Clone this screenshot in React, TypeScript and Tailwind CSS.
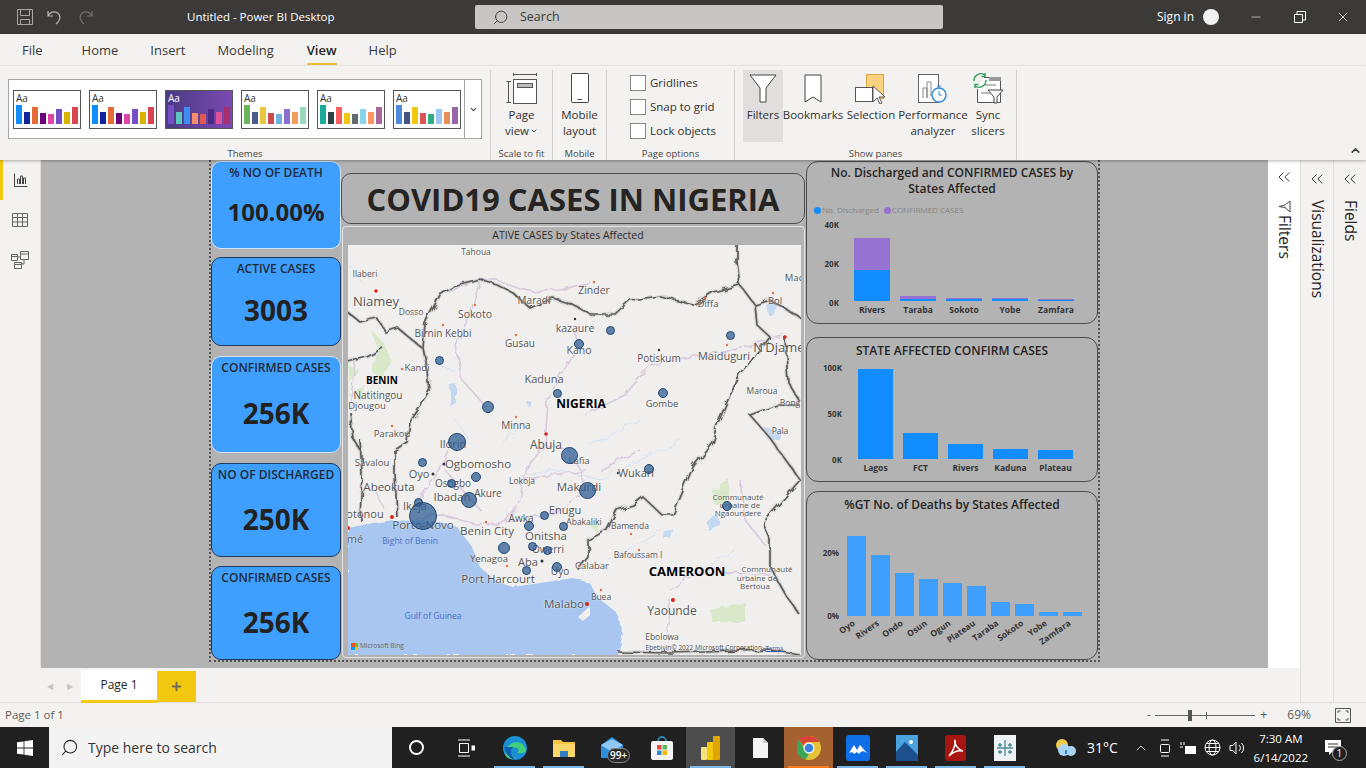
import { ChevronDown, ChevronUp, ChevronsLeft, Minus, Plus, Search, X } from 'lucide-react';

const themes = [
  { bg: 'bg-white', text: 'text-[#333]', bars: ['#118DFF', '#12239E', '#E66C37', '#6B007B', '#E044A7', '#744EC2', '#D9B300', '#D64550'] },
  { bg: 'bg-white', text: 'text-[#333]', bars: ['#118DFF', '#12239E', '#E66C37', '#6B007B', '#E044A7', '#744EC2', '#D9B300', '#D64550'] },
  { bg: 'bg-gradient-to-r from-[#4b3a84] to-[#7b49b3]', text: 'text-white', bars: ['#744EC2', '#5BC8C0', '#3D8DF0', '#F88C6C', '#E25A50', '#4B2A84', '#E0509A', '#A8306E'] },
  { bg: 'bg-white', text: 'text-[#333]', bars: ['#6BB35C', '#4C5A8C', '#E8C73E', '#CC4A4A', '#6FB0E0', '#8B6FD0', '#F29D5F', '#9AD9BC'] },
  { bg: 'bg-white', text: 'text-[#333]', bars: ['#1AAB9C', '#2E4146', '#F95E61', '#F2C80F', '#5F6B6D', '#8AD4EB', '#FE9666', '#A66999'] },
  { bg: 'bg-white', text: 'text-[#333]', bars: ['#4B8BD9', '#44547F', '#F2C811', '#DB5555', '#2FAE82', '#9BC8F0', '#E38D5A', '#9A64A8'] },
];
const themeHeights = [19, 12, 17, 11, 10, 15, 12, 17];

const kpis = [
  { title: '% NO OF DEATH', value: '100.00%', size: 'text-[24px]', h: 'h-[88px]', mb: 'mb-[8px]', gap: 'mt-[13px]', border: 'border-[#cfe4f7]' },
  { title: 'ACTIVE CASES', value: '3003', size: 'text-[28px]', h: 'h-[89px]', mb: 'mb-[10px]', gap: 'mt-[15px]', border: 'border-[#1d3b5e]' },
  { title: 'CONFIRMED CASES', value: '256K', size: 'text-[28px]', h: 'h-[98px]', mb: 'mb-[10px]', gap: 'mt-[19px]', border: 'border-[#cfe4f7]' },
  { title: 'NO OF DISCHARGED', value: '250K', size: 'text-[28px]', h: 'h-[94px]', mb: 'mb-[9px]', gap: 'mt-[18px]', border: 'border-[#1d3b5e]' },
  { title: 'CONFIRMED CASES', value: '256K', size: 'text-[28px]', h: 'h-[94px]', mb: 'mb-0', gap: 'mt-[18px]', border: 'border-[#1d3b5e]' },
];

type Label = [string, number, number, number, string?];
const labels: Label[] = [
  ['Tahoua', 476, 252, 8.5], ['Ilaberi', 365, 274, 8.5], ['Mac', 794, 278, 9.5], ['Zinder', 594, 290, 10.5],
  ['Maradi', 534, 300, 10], ['Niamey', 376, 301, 13], ['Dosso', 411, 312, 8.5], ['Diffa', 708, 304, 9.5],
  ['Bol', 775, 301, 9.5], ['Sokoto', 475, 314, 10.5], ['Birnin Kebbi', 443, 333, 10], ['kazaure', 575, 328, 10.5],
  ['Gusau', 520, 343, 10], ['Kano', 579, 350, 10.5], ['Potiskum', 659, 358, 10], ['Maiduguri', 724, 355, 11],
  ['N\u2019Djame', 779, 347, 13], ['Kandi', 417, 368, 9.5], ['BENIN', 382, 380, 10, 'b'], ['Kaduna', 544, 378, 11],
  ['Natitingou', 378, 395, 10], ['Djougou', 367, 406, 9.5], ['NIGERIA', 581, 404, 12, 'b'], ['Gombe', 662, 404, 9.5],
  ['Maroua', 762, 391, 8.5], ['Bong', 790, 403, 8.5], ['Pala', 780, 431, 8.5], ['Parakou', 392, 434, 9.5],
  ['Minna', 516, 425, 10], ['Ilorin', 453, 443, 11], ['Abuja', 546, 445, 12], ['Savalou', 372, 463, 9.5],
  ['Ogbomosho', 478, 464, 11.5], ['Oyo', 419, 473, 11], ['Osogbo', 453, 483, 10], ['Abeokuta', 389, 487, 11.5],
  ['Ibadan', 452, 497, 11.5], ['Akure', 488, 493, 10], ['Lafia', 579, 461, 9.5], ['Makurdi', 579, 487, 11.5],
  ['Wukari', 636, 472, 11], ['Lokoja', 522, 481, 8.5], ['Ikeja', 415, 505, 11], ['otonou', 365, 513, 11],
  ['Porto-Novo', 423, 525, 11.5], ['Enugu', 565, 509, 11], ['Awka', 521, 518, 10], ['Abakaliki', 584, 522, 8.5],
  ['Benin City', 487, 531, 11.5], ['Onitsha', 546, 536, 11.5], ['Owerri', 548, 549, 10], ['Bamenda', 630, 526, 8.5],
  ['mé', 355, 538, 11], ['Bight of Benin', 410, 541, 8.5, 'w'], ['Yenagoa', 489, 559, 9.5], ['Aba', 528, 561, 11],
  ['Uyo', 560, 571, 10], ['Calabar', 592, 566, 9.5], ['Port Harcourt', 498, 579, 11.5], ['CAMEROON', 687, 571, 13, 'b'],
  ['Bafoussam I', 638, 555, 8.5], ['Communauté', 738, 497, 8], ['urbaine de', 740, 505, 8], ['Ngaoundere', 738, 513, 8],
  ['Communauté', 767, 569, 8], ['urbaine de', 757, 578, 8], ['Bertoua', 755, 586, 8], ['Malabo', 564, 604, 11.5],
  ['Buea', 601, 597, 8.5], ['Yaounde', 672, 611, 12], ['Gulf of Guinea', 433, 616, 8.5, 'w'], ['Ebolowa', 662, 637, 8.5],
];

const pins = [
  [610, 330, 4.5], [730, 335, 4.5], [579, 344, 5], [439, 360, 4.5], [557, 393, 4.5], [663, 393, 5], [488, 407, 6],
  [457, 442, 9], [569, 455, 8.5], [422, 462, 4.5], [649, 469, 5], [476, 477, 5], [451, 483, 4.5], [587, 490, 8.5],
  [469, 500, 8], [418, 502, 4.5], [423, 516, 14], [544, 515, 4.5], [529, 526, 5], [563, 526, 4.5], [727, 506, 5],
  [504, 548, 6], [532, 546, 4.5], [547, 550, 4.5], [526, 570, 4.5], [557, 567, 5],
];

const borders = [
  'M425 323L440 295L453 287L480 280L497 285L513 293L530 308L553 298L573 305L590 314L615 314L630 300L660 296L693 305L713 292L740 285L755 305L757 325L770 337L752 362L740 375L730 395L717 425L712 442L693 467L673 515L662 515L643 497L633 505L617 510L607 530L588 540L588 557L578 570',
  'M737 245L737 262L740 285',
  'M425 323L423 348L428 372L430 392L410 422L407 442L395 450L395 473L397 517',
  'M360 440L362 473L360 520',
  'M347 312L360 322L377 318L385 332L398 328L422 348',
  'M348 362L367 357L383 348',
  'M350 412L353 438L360 450',
  'M785 338L788 382L800 402M777 405L750 415L770 438L800 480L763 523L770 540L770 567L787 597L800 615',
  'M777 405L800 405M755 305L770 300L801 318',
  'M618 652L670 653L770 650L800 655',
];
const roads = [
  'M440 295L480 280L497 280L530 292L560 290L590 282M480 280L470 315L455 345L462 380L480 400L488 410',
  'M575 330L578 350L560 375L548 400L545 445L525 470L520 500L505 522M545 445L570 450L580 470L585 490L560 510L520 520L480 525L440 515L410 520',
  'M585 415L625 395L650 365L690 358L750 345L785 335M480 510L445 470M520 480L585 470M415 505L440 470L448 450',
  'M740 480L745 520L765 545M670 600L668 640M670 590L700 570L770 575M600 470L640 450',
  'M375 490L385 510M355 360L350 410',
];

const Dot = ({ x, y, c = '#e8703a', r = 1.2 }: { x: number; y: number; c?: string; r?: number }) => <circle cx={x} cy={y} r={r} fill={c} />;

function MapBase() {
  return (
    <svg viewBox="348 245 453 410" className="absolute inset-0 h-full w-full">
      <defs>
        <filter id="rough" x="-5%" y="-5%" width="110%" height="110%">
          <feTurbulence type="fractalNoise" baseFrequency="0.09" numOctaves="2" seed="4" />
          <feDisplacementMap in="SourceGraphic" scale="7" />
        </filter>
        <filter id="coast" x="-5%" y="-5%" width="110%" height="110%">
          <feTurbulence type="fractalNoise" baseFrequency="0.12" numOctaves="2" seed="7" />
          <feDisplacementMap in="SourceGraphic" scale="3" />
        </filter>
      </defs>
      <rect x="348" y="245" width="453" height="410" fill="#f0efed" />
      <g filter="url(#rough)">
        <path d="M372 330L385 345L392 362L380 378L372 372L378 350ZM348 365L360 372L348 380ZM348 395L365 385L360 400ZM712 490L730 480L728 505L715 505ZM710 610L745 602L745 622L712 622ZM590 525L600 520L598 535Z" fill="#d9e8c8" />
      </g>
      <path d="M348 528L373 523L393 520L440 522L457 527L472 547L480 567L497 582L513 587L540 583L573 578L590 583L597 597L617 613L623 633L618 655L348 655Z" fill="#a8c6ef" filter="url(#coast)" />
      <path d="M578 617L590 606L590 615L583 621Z" fill="#f0efed" />
      <g fill="#c3d9f2" filter="url(#rough)">
        <path d="M450 385L456 384L456 403L450 406ZM766 305L778 300L775 315L768 315ZM525 400L532 401L529 408ZM664 530L672 528L670 538L663 538ZM705 520L720 515L720 525L708 530ZM765 428L782 432L780 440L768 440Z" />
        <path d="M350 265L360 280M430 360L455 372M455 420L470 440M500 440L530 420M590 445L640 420M520 475L560 470L600 480L640 460L680 440M610 560L660 530M700 570L735 550" stroke="#d2e2f4" strokeWidth="1" fill="none" />
      </g>
      <g fill="none" stroke="#d9c8de" strokeWidth="1.5" strokeLinejoin="round" filter="url(#rough)">
        {roads.map((d) => <path key={d} d={d} />)}
      </g>
      <g fill="none" strokeLinejoin="round" filter="url(#rough)">
        {borders.map((d) => <path key={d} d={d} stroke="#c9c9c9" strokeOpacity="0.6" strokeWidth="4" />)}
        {borders.map((d) => <path key={d + 'b'} d={d} stroke="#5c5c5c" strokeWidth="1.7" />)}
      </g>
      <Dot x={376} y={291} c="#d9241c" r={1.8} />
      <Dot x={785} y={337} c="#d9241c" r={1.8} />
      <Dot x={546} y={434} c="#d9241c" r={1.8} />
      <Dot x={392} y={517} c="#d9241c" r={2} />
      <Dot x={348} y={528} c="#d9241c" r={2} />
      <Dot x={587} y={604} c="#d9241c" r={2} />
      <Dot x={673} y={600} c="#d9241c" r={2} />
      <Dot x={575} y={319} c="#333" />
      <Dot x={659} y={350} c="#333" />
      <Dot x={444} y={464} c="#333" r={1.5} />
      <Dot x={433} y={474} c="#333" r={1.5} />
      <Dot x={618} y={473} c="#333" />
      <Dot x={542} y={561} c="#333" r={1.5} />
      <Dot x={594} y={282} /><Dot x={516} y={335} /><Dot x={443} y={325} /><Dot x={475} y={305} />
      <Dot x={402} y={369} /><Dot x={392} y={426} /><Dot x={516} y={417} /><Dot x={705} y={298} />
      <Dot x={773} y={293} /><Dot x={727} y={345} /><Dot x={579} y={566} /><Dot x={601} y={590} />
      <Dot x={486} y={522} /><Dot x={507} y={566} /><Dot x={631} y={534} /><Dot x={639} y={550} />
    </svg>
  );
}

function MapVisual() {
  return (
    <div className="h-[432px] w-[463px] rounded-sm border border-[#e4e4e4] bg-[#b3b3b3] pl-[5px]">
      <div className="flex h-[18px] items-center justify-center pr-[16px] text-[10.5px] text-[#2b2b2b]">ATIVE CASES by States Affected</div>
      <div className="relative h-[410px] w-[453px] overflow-hidden">
        <MapBase />
        {labels.map(([text, x, y, size, kind], i) => (
          <span
            key={text + i}
            className={`absolute -translate-x-1/2 -translate-y-1/2 whitespace-nowrap leading-none [text-shadow:0_0_2px_#fff] ${kind === 'b' ? 'font-bold text-black' : kind === 'w' ? 'text-[#4a72c4] [text-shadow:none]' : 'text-[#555]'}`}
            style={{ left: x - 348, top: y - 245, fontSize: size }}
          >
            {text}
          </span>
        ))}
        {pins.map(([x, y, r]) => (
          <span
            key={`${x}-${y}`}
            className="absolute rounded-full border border-[#24476f] bg-[#2f5e94]/75"
            style={{ left: x - 348 - r, top: y - 245 - r, width: r * 2, height: r * 2 }}
          />
        ))}
        <span className="absolute bottom-[5px] left-[3px] flex items-center gap-[2px] text-[6.5px] leading-none text-[#666]">
          <span className="grid h-[7px] w-[7px] grid-cols-2">
            <i className="bg-[#f25022]" /><i className="bg-[#7fba00]" /><i className="bg-[#00a4ef]" /><i className="bg-[#ffb900]" />
          </span>
          Microsoft Bing
        </span>
        <span className="absolute bottom-[4px] right-[39px] whitespace-nowrap text-[6.5px] leading-none text-[#555]">Ebebiyin© 2022 Microsoft Corporation</span>
        <span className="absolute bottom-[4px] right-[18px] text-[6px] leading-none text-[#2b5fb0] underline">Terms</span>
      </div>
    </div>
  );
}

const chartCard = 'rounded-[12px] border border-[#4d4d4d] bg-[#b3b3b3]';

function DischargedChart() {
  const bars = [
    { name: 'Rivers', blue: 31, purple: 32 },
    { name: 'Taraba', blue: 2, purple: 3 },
    { name: 'Sokoto', blue: 2, purple: 1 },
    { name: 'Yobe', blue: 2, purple: 1 },
    { name: 'Zamfara', blue: 1, purple: 1 },
  ];
  return (
    <div className={`${chartCard} h-[165px] w-[292px]`}>
      <p className="mt-[3px] text-center text-[12px] font-semibold leading-[16px] text-[#252423]">No. Discharged and CONFIRMED CASES by<br />States Affected</p>
      <div className="ml-[7px] mt-[7px] flex h-[12px] items-center text-[8px] text-[#858585]">
        <i className="mr-[1px] h-[7px] w-[7px] rounded-full bg-[#118dff]" />No. Discharged
        <i className="ml-[5px] mr-[1px] h-[7px] w-[7px] rounded-full bg-[#9673d2]" />CONFIRMED CASES
      </div>
      <div className="ml-[8px] flex">
        <div className="mt-[4px] flex h-[88px] w-[24px] flex-col justify-between text-right text-[8px] font-bold leading-[10px] text-[#333]">
          <span>40K</span><span>20K</span><span>0K</span>
        </div>
        <div className="ml-[15px]">
          <div className="flex h-[85px] items-end gap-[10px]">
            {bars.map((b) => (
              <div key={b.name} className="w-[36px]">
                <div className="bg-[#9673d2]" style={{ height: b.purple }} />
                <div className="bg-[#118dff]" style={{ height: b.blue }} />
              </div>
            ))}
          </div>
          <div className="mt-[3px] flex gap-[10px]">
            {bars.map((b) => <span key={b.name} className="w-[36px] whitespace-nowrap text-center text-[8.5px] font-bold leading-[12px] text-[#333]">{b.name}</span>)}
          </div>
        </div>
      </div>
    </div>
  );
}

function ConfirmChart() {
  const bars = [['Lagos', 90], ['FCT', 26], ['Rivers', 15], ['Kaduna', 10], ['Plateau', 9]] as const;
  return (
    <div className={`${chartCard} h-[145px] w-[292px]`}>
      <p className="mt-[5px] text-center text-[12px] font-semibold leading-[16px] text-[#252423]">STATE AFFECTED CONFIRM CASES</p>
      <div className="ml-[8px] mt-[4px] flex">
        <div className="flex h-[102px] w-[27px] flex-col justify-between text-right text-[8px] font-bold leading-[10px] text-[#333]">
          <span>100K</span><span>50K</span><span>0K</span>
        </div>
        <div className="ml-[16px]">
          <div className="flex h-[96px] items-end gap-[10px]">
            {bars.map(([name, h]) => <div key={name} className="w-[35px] bg-[#118dff]" style={{ height: h }} />)}
          </div>
          <div className="mt-[3px] flex gap-[10px]">
            {bars.map(([name]) => <span key={name} className="w-[35px] whitespace-nowrap text-center text-[8.5px] font-bold leading-[12px] text-[#333]">{name}</span>)}
          </div>
        </div>
      </div>
    </div>
  );
}

function DeathsChart() {
  const bars = [['Oyo', 80], ['Rivers', 61], ['Ondo', 43], ['Osun', 37], ['Ogun', 33], ['Plateau', 30], ['Taraba', 14], ['Sokoto', 12], ['Yobe', 4], ['Zamfara', 4]] as const;
  return (
    <div className={`${chartCard} h-[169px] w-[292px]`}>
      <p className="mt-[5px] text-center text-[12px] font-semibold leading-[16px] text-[#252423]">%GT No. of Deaths by States Affected</p>
      <div className="ml-[8px] mt-[23px] flex">
        <div className="relative w-[24px] text-right text-[8px] font-bold leading-[10px] text-[#333]">
          <span className="absolute right-0 top-[12px]">20%</span>
          <span className="absolute right-0 top-[75px]">0%</span>
        </div>
        <div className="ml-[8px]">
          <div className="flex h-[80px] items-end gap-[5px]">
            {bars.map(([name, h]) => <div key={name} className="w-[19px] bg-[#3f9fff]" style={{ height: h }} />)}
          </div>
          <div className="mt-[2px] flex gap-[5px]">
            {bars.map(([name]) => (
              <div key={name} className="flex h-[30px] w-[19px] justify-end">
                <span className="mr-[15px] h-[10px] origin-top-right -rotate-[35deg] whitespace-nowrap text-[8.5px] font-bold leading-[10px] text-[#333]">{name}</span>
              </div>
            ))}
          </div>
        </div>
      </div>
    </div>
  );
}

function Report() {
  return (
    <div className="ml-[168px] flex h-[502px] w-[891px] border-x-2 border-b-2 border-dotted border-[#555]">
      <div className="mt-[1px] flex w-[130px] flex-col">
        {kpis.map((k) => (
          <div key={k.title + k.h} className={`${k.h} ${k.mb} rounded-[10px] border pt-[3px] ${k.border} bg-[#3f9fff] text-center text-[#1f2a36]`}>
            <div className="text-[12px] font-semibold leading-[16px]">{k.title}</div>
            <div className={`${k.gap} ${k.size} font-bold leading-[36px] text-[#222]`}>{k.value}</div>
          </div>
        ))}
      </div>
      <div className="flex w-[464px] flex-col">
        <div className="mt-[13px] flex h-[51px] items-center justify-center rounded-[10px] border border-[#4d4d4d] pt-[1px] text-[31px] font-bold text-[#252423]">COVID19 CASES IN NIGERIA</div>
        <div className="ml-[1px] mt-[2px]"><MapVisual /></div>
      </div>
      <div className="ml-[1px] mt-[1px] flex flex-col">
        <DischargedChart />
        <div className="mt-[13px]"><ConfirmChart /></div>
        <div className="mt-[9px]"><DeathsChart /></div>
      </div>
    </div>
  );
}

function RibbonLabel({ lines, w = '' }: { lines: string[]; w?: string }) {
  return <div className={`whitespace-nowrap text-center text-[11.5px] leading-[16px] text-[#323130] ${w}`}>{lines.map((l) => <div key={l}>{l}</div>)}</div>;
}

function Section({ title, className, children }: { title: string; className: string; children: React.ReactNode }) {
  return (
    <div className={`flex h-[90px] flex-col border-r border-[#d2d0ce] ${className}`}>
      <div className="flex-1">{children}</div>
      <div className="mb-[-1px] text-center text-[9.5px] leading-[14px] text-[#484644]">{title}</div>
    </div>
  );
}

function Ribbon() {
  return (
    <div className="relative z-10 flex h-[94px] bg-[#f3f2f1] pt-[4px] shadow-[0_1px_3px_rgba(0,0,0,0.3)]">
      <Section title="Themes" className="w-[491px]">
        <div className="ml-[8px] mt-[9px] flex h-[60px] w-[474px] border border-[#a6a6a6] bg-white">
          <div className="flex flex-1 items-center gap-[8px] pl-[4px]">
            {themes.map((t, i) => (
              <div key={i} className={`h-[39px] w-[68px] border border-[#555] ${t.bg}`}>
                <div className={`pl-[2px] text-[10px] leading-[14px] ${t.text}`}>Aa</div>
                <div className="ml-[2px] flex h-[19px] items-end gap-[2px]">
                  {t.bars.map((c, j) => <i key={j} className="w-[6px]" style={{ height: themeHeights[j], backgroundColor: c }} />)}
                </div>
              </div>
            ))}
          </div>
          <div className="flex w-[17px] items-center justify-center border-l border-[#a6a6a6]"><ChevronDown size={9} strokeWidth={3} className="text-[#444]" /></div>
        </div>
      </Section>
      <Section title="Scale to fit" className="w-[62px]">
        <div className="flex flex-col items-center pt-[3px]">
          <svg width="32" height="32" viewBox="0 0 32 32" fill="none" stroke="#555" strokeWidth="1" className="h-[32px]">
            <path d="M7.5 1.5H30.5M7.5 0V3M30.5 0V3M.5 8.5H5M.5 29.5H5M2.5 8.5V29.5" />
            <rect x="7.5" y="6.5" width="23" height="24" fill="#fff" />
            <rect x="11.5" y="10.5" width="15" height="4" fill="#bdbdbd" />
          </svg>
          <div className="mt-[2px]"><RibbonLabel lines={['Page']} /></div>
          <div className="flex items-center text-[11.5px] leading-[16px] text-[#323130]">view<ChevronDown size={8} strokeWidth={2.5} className="ml-[1px]" /></div>
        </div>
      </Section>
      <Section title="Mobile" className="w-[54px]">
        <div className="flex flex-col items-center pt-[3px]">
          <svg width="18" height="32" viewBox="0 0 18 32" fill="#fff" stroke="#444"><rect x=".5" y=".5" width="17" height="29" rx="1" /><path d="M6.5 26.5H11" /></svg>
          <div className="mt-[2px]"><RibbonLabel lines={['Mobile', 'layout']} /></div>
        </div>
      </Section>
      <Section title="Page options" className="w-[128px]">
        <div className="flex flex-col gap-[8px] pl-[23px] pt-[5px]">
          {['Gridlines', 'Snap to grid', 'Lock objects'].map((o) => (
            <div key={o} className="flex h-[16px] items-center gap-[4px] text-[11.5px] text-[#323130]">
              <i className="h-[16px] w-[16px] border border-[#8a8886] bg-white" />{o}
            </div>
          ))}
        </div>
      </Section>
      <Section title="Show panes" className="w-[282px]">
        <div className="flex">
          <div className="ml-[8px] flex h-[72px] w-[40px] flex-col items-center bg-[#e1dfdd] pt-[4px]">
            <svg width="28" height="30" viewBox="0 0 28 30" fill="#fff" stroke="#444"><path d="M1 1H27L17 14V28H11V14Z" /></svg>
            <div className="mt-[3px]"><RibbonLabel lines={['Filters']} /></div>
          </div>
          <div className="flex w-[60px] flex-col items-center pt-[4px]">
            <svg width="18" height="30" viewBox="0 0 18 30" fill="#fff" stroke="#444"><path d="M1 1H17V28L9 23L1 28Z" /></svg>
            <div className="mt-[3px]"><RibbonLabel lines={['Bookmarks']} /></div>
          </div>
          <div className="flex w-[56px] flex-col items-center pt-[4px]">
            <svg width="32" height="30" viewBox="0 0 32 30" stroke="#555">
              <rect x="11.5" y=".5" width="17" height="24" fill="#fdd27f" stroke="#d9a441" />
              <rect x=".5" y="13.5" width="17" height="14" fill="#fff" />
              <path d="M18 12V28L22 24L25 30L27 29L24 23H30Z" fill="#fff" />
            </svg>
            <div className="mt-[3px]"><RibbonLabel lines={['Selection']} /></div>
          </div>
          <div className="flex w-[68px] flex-col items-center pt-[4px]">
            <svg width="30" height="30" viewBox="0 0 30 30" fill="none">
              <rect x=".5" y=".5" width="20" height="28" fill="#fff" stroke="#666" />
              <path d="M5 24V14H9V24M9 24V8H13V22" stroke="#888" />
              <circle cx="21" cy="21" r="7" fill="#fff" stroke="#2b88d8" strokeWidth="1.4" />
              <path d="M21 17V21H24M19 12H23" stroke="#2b88d8" />
            </svg>
            <div className="mt-[3px]"><RibbonLabel lines={['Performance', 'analyzer']} /></div>
          </div>
          <div className="flex w-[42px] flex-col items-center pt-[2px]">
            <svg width="32" height="32" viewBox="0 0 32 32" fill="none">
              <path d="M12 5.5H28.5V30.5H5.5V17" fill="#fff" stroke="#555" />
              <rect x="17" y="5" width="12" height="4" fill="#999" />
              <path d="M13 13H24M9 21H18" stroke="#777" />
              <path d="M16 18H31L25 25V31H22V25Z" fill="#fff" stroke="#444" />
              <path d="M2 9A7 7 0 0 1 13 3M13 1V4.5H9.5M14 8A7 7 0 0 1 3 14M3 16V12.5H6.5" stroke="#2e9e5b" strokeWidth="1.4" />
            </svg>
            <div className="mt-[3px]"><RibbonLabel lines={['Sync', 'slicers']} /></div>
          </div>
        </div>
      </Section>
      <ChevronUp size={13} strokeWidth={3} className="absolute bottom-[3px] right-[4px] text-[#444]" />
    </div>
  );
}

function TitleBar() {
  return (
    <div className="flex h-[34px] items-center bg-[#3b3a39] text-white">
      <svg width="16" height="16" viewBox="0 0 16 16" fill="none" stroke="#a9a8a7" className="ml-[17px]"><path d="M.5.5H15.5V15.5H.5ZM3.5.5V6.5H12.5V.5M3.5 15.5V10.5H12.5V15.5" /></svg>
      <svg width="16" height="16" viewBox="0 0 16 16" fill="none" stroke="#b5b4b3" strokeWidth="1.2" className="ml-[14px]"><path d="M1 2V7H6M1 7C3 3 7 2 10 3.5C14 6 14 11 9 15" /></svg>
      <svg width="16" height="16" viewBox="0 0 16 16" fill="none" stroke="#6f6e6d" strokeWidth="1.2" className="ml-[14px]"><path d="M15 2V7H10M15 7C13 3 9 2 6 3.5C2 6 2 11 7 15" /></svg>
      <span className="ml-[94px] w-[148px] whitespace-nowrap text-[11.5px]">Untitled - Power BI Desktop</span>
      <div className="ml-[140px] flex h-[24px] w-[468px] items-center rounded-[2px] bg-[#c8c6c4] pl-[17px] text-[12.5px] text-[#3b3a39]">
        <Search size={17} strokeWidth={1.3} className="-scale-x-100" />
        <span className="ml-[11px]">Search</span>
      </div>
      <span className="ml-[214px] text-[12px]">Sign in</span>
      <i className="ml-[9px] h-[16px] w-[16px] rounded-full bg-[#f1f1f1]" />
      <Minus size={14} strokeWidth={1} className="ml-[30px]" />
      <svg width="12" height="12" viewBox="0 0 12 12" fill="none" stroke="#fff" className="ml-[31px]"><path d="M.5 3.5H8.5V11.5H.5ZM3 3.5V.5H11.5V9H8.5" /></svg>
      <X size={16} strokeWidth={1.1} className="ml-[29px]" />
    </div>
  );
}

function TabRow() {
  const tabs = [['File', 'ml-[22px]'], ['Home', 'ml-[39px]'], ['Insert', 'ml-[32px]'], ['Modeling', 'ml-[32px]'], ['View', 'ml-[33px]'], ['Help', 'ml-[32px]']];
  return (
    <div className="flex h-[32px] items-center bg-[#f3f2f1] pt-[2px] text-[13px] text-[#3b3a39]">
      {tabs.map(([t, ml]) => (
        <span key={t} className={`relative ${ml} ${t === 'View' ? 'font-semibold text-[#252423]' : ''}`}>
          {t}
          {t === 'View' && <i className="absolute -bottom-[4px] left-0 h-[2px] w-full rounded bg-[#e8bf2e]" />}
        </span>
      ))}
    </div>
  );
}

function LeftRail() {
  return (
    <div className="flex w-[41px] shrink-0 flex-col border-r border-[#e1dfdd] bg-[#f3f2f1]">
      <div className="flex h-[40px] items-center justify-center border-l-[3px] border-[#f2c811] pr-[2px]">
        <svg width="14" height="14" viewBox="0 0 14 14" fill="none" stroke="#444"><path d="M.5.5V13.5H13.5M3.5 11V6H5.5V11M6.5 11V3H8.5V11M9.5 11V5H11.5V11" /></svg>
      </div>
      <div className="flex h-[40px] items-center justify-center pr-[1px]">
        <svg width="16" height="14" viewBox="0 0 16 14" fill="none" stroke="#666"><path d="M.5.5H15.5V13.5H.5ZM.5 4.5H15.5M.5 9H15.5M5.5.5V13.5M10.5.5V13.5" /></svg>
      </div>
      <div className="flex h-[40px] items-center justify-center pr-[1px]">
        <svg width="18" height="18" viewBox="0 0 18 18" fill="none" stroke="#666"><path d="M.5 3.5H6.5V9.5H.5ZM9.5.5H17.5V8.5H9.5ZM3.5 11.5H10.5V17.5H3.5ZM.5 5.5H6.5M9.5 3H17.5M3.5 13.5H10.5M6.5 6H9.5M13 8.5V13H10.5" /></svg>
      </div>
    </div>
  );
}

function SidePane({ name, className, filter }: { name: string; className: string; filter?: boolean }) {
  return (
    <div className={`flex flex-col items-center text-[#252423] ${className}`}>
      <ChevronsLeft size={20} strokeWidth={1.1} className={filter ? 'mt-[7px]' : 'mt-[9px]'} />
      {filter && (
        <svg width="13" height="13" viewBox="0 0 13 13" fill="none" stroke="#444" className="mt-[13px]"><path d="M12 1V12L7 7.5L1 6.5L7 5Z" /></svg>
      )}
      <span className={`${filter ? 'mt-[2px]' : 'mt-[11px]'} text-[15.5px] leading-none [writing-mode:vertical-rl]`}>{name}</span>
    </div>
  );
}

function PageBar() {
  return (
    <div className="flex h-[35px] border-b border-[#e1dfdd] bg-[#f3f2f1]">
      <div className="flex w-[81px] shrink-0 justify-end gap-[14px] pr-[8px] pt-[12px] text-[8px] text-[#c8c6c4]">
        <span>◀</span><span>▶</span>
      </div>
      <div className="mt-[2px] flex h-[33px] w-[76px] items-center justify-center border-b-[3px] border-[#f2c811] bg-white text-[12px] text-[#252423]">Page 1</div>
      <div className="mt-[3px] flex h-[31px] w-[39px] items-center justify-center bg-[#f2c811]"><Plus size={13} strokeWidth={3.5} className="text-[#6e6a55]" /></div>
      <div className="ml-auto w-[33px] border-l border-[#e1dfdd]" />
      <div className="w-[33px] border-l border-[#e1dfdd]" />
    </div>
  );
}

function StatusBar() {
  return (
    <div className="flex h-[24px] items-center bg-[#f3f2f1] pl-[5px] text-[11.5px] text-[#605e5c]">
      <span>Page 1 of 1</span>
      <span className="ml-auto text-[12px]">-</span>
      <div className="relative ml-[4px] h-[1px] w-[100px] bg-[#666]">
        <i className="absolute left-[33px] top-[-5px] h-[11px] w-[4px] bg-[#555]" />
        <i className="absolute left-[51px] top-[-3px] h-[7px] w-[1px] bg-[#666]" />
      </div>
      <span className="ml-[5px] text-[13px]">+</span>
      <span className="ml-[20px] text-[12px]">69%</span>
      <svg width="16" height="15" viewBox="0 0 16 15" fill="none" stroke="#555" className="ml-[24px] mr-[15px]"><path d="M.5.5H15.5V14.5H.5ZM3 5V3H5.5M10.5 3H13V5M3 10V12H5.5M10.5 12H13V10" /></svg>
    </div>
  );
}

function Tile({ className = '', bar, children }: { className?: string; bar?: string; children: React.ReactNode }) {
  return (
    <div className={`relative flex h-[41px] w-[49px] shrink-0 items-center justify-center ${className}`}>
      {children}
      {bar && <i className={`absolute bottom-0 left-[4px] right-[4px] h-[2px] ${bar}`} />}
    </div>
  );
}

function Taskbar() {
  return (
    <div className="flex h-[41px] items-center bg-[#202020] text-white">
      <div className="flex w-[49px] justify-center">
        <svg width="16" height="16" viewBox="0 0 16 16" fill="#fff"><path d="M0 2.3L6.6 1.4V7.6H0ZM7.4 1.3L16 0V7.6H7.4ZM0 8.4H6.6V14.6L0 13.7ZM7.4 8.4H16V16L7.4 14.7Z" /></svg>
      </div>
      <div className="flex h-[41px] w-[343px] items-center bg-[#f3f3f3] pl-[11px] text-[14px] text-[#333]">
        <Search size={19} strokeWidth={1.3} className="-scale-x-100 text-[#222]" />
        <span className="ml-[9px]">Type here to search</span>
      </div>
      <Tile><i className="h-[15px] w-[15px] rounded-full border-2 border-white" /></Tile>
      <Tile>
        <svg width="18" height="18" viewBox="0 0 18 18" fill="none" stroke="#fff"><path d="M1 1H13M1 17H13M2.5 4.5H11.5V13.5H2.5Z" /><rect x="15" y="7" width="2.5" height="4" fill="#fff" /></svg>
      </Tile>
      <Tile bar="bg-[#7cb8e8]">
        <svg width="26" height="26" viewBox="0 0 26 26">
          <circle cx="13" cy="13" r="12" fill="#1b8fd6" />
          <path d="M3 18C5 6 20 3 24 14C25 18 18 19 15 18C19 15 15 11 11 13C8 15 9 21 14 24C8 25 3 23 3 18Z" fill="#44d07a" />
          <path d="M2 12C3 18 7 24 14 25C8 20 8 14 12 12Z" fill="#0f5fb0" />
        </svg>
      </Tile>
      <Tile bar="bg-[#7cb8e8]">
        <svg width="22" height="22" viewBox="0 0 22 22"><path d="M0 3H8L10 5H22V19H0Z" fill="#f5c542" /><rect y="7" width="22" height="13" fill="#fbd669" /><rect x="7" y="14" width="8" height="6" fill="#2f7fc1" /></svg>
      </Tile>
      <Tile>
        <svg width="26" height="24" viewBox="0 0 26 24"><path d="M1 9L12 1L23 9V22H1Z" fill="#2b8fe0" /><path d="M1 9L12 16L23 9L12 3Z" fill="#8ecaf5" /></svg>
        <span className="absolute bottom-[5px] left-[19px] rounded-full border border-[#888] bg-[#2b2b2b] px-[2px] text-[10px] font-semibold leading-[13px]">99+</span>
      </Tile>
      <Tile>
        <svg width="22" height="24" viewBox="0 0 22 24"><path d="M7 5A4 4 0 0 1 15 5" fill="none" stroke="#2b9fd8" strokeWidth="1.5" /><rect y="5" width="22" height="19" rx="2" fill="#f4f4f4" /><rect x="6" y="9" width="4.5" height="4.5" fill="#e74c3c" /><rect x="11.5" y="9" width="4.5" height="4.5" fill="#5cb85c" /><rect x="6" y="14.5" width="4.5" height="4.5" fill="#2b88d8" /><rect x="11.5" y="14.5" width="4.5" height="4.5" fill="#f2b800" /></svg>
      </Tile>
      <Tile className="bg-[#4d4d4d]" bar="bg-[#7cb8e8]">
        <svg width="20" height="24" viewBox="0 0 20 24"><rect y="11" width="6" height="13" rx="1" fill="#f7e27c" /><rect x="6" y="6" width="7" height="18" rx="1" fill="#f2c811" /><rect x="12" y="0" width="7" height="24" rx="1" fill="#e0a500" /></svg>
      </Tile>
      <Tile>
        <svg width="16" height="20" viewBox="0 0 16 20"><path d="M1 0H11L16 5V20H1Z" fill="#f4f4f4" /><path d="M11 0L16 5H11Z" fill="#ccc" /></svg>
      </Tile>
      <Tile className="bg-[#a5612f]" bar="bg-[#f7791e]">
        <svg width="24" height="24" viewBox="0 0 24 24">
          <circle cx="12" cy="12" r="12" fill="#e6c13a" />
          <path d="M12 0A12 12 0 0 1 22.4 6H12A6 6 0 0 0 6.3 10L2 3.8A12 12 0 0 1 12 0Z" fill="#d9443a" />
          <path d="M2 3.8L8 14A6 6 0 0 0 12 18L8.6 23.5A12 12 0 0 1 2 3.8Z" fill="#3aa655" />
          <circle cx="12" cy="12" r="5.5" fill="#fff" /><circle cx="12" cy="12" r="4.3" fill="#3b7fe0" />
        </svg>
      </Tile>
      <Tile bar="bg-[#7cb8e8]">
        <svg width="24" height="26" viewBox="0 0 24 26"><rect width="24" height="26" rx="3" fill="#0f6fe8" /><path d="M3 18L8 10L11 15L14 10L21 18C17 15 15 16 13 19L11 17L8 19C7 17 5 17 3 18Z" fill="#fff" /></svg>
      </Tile>
      <Tile bar="bg-[#7cb8e8]">
        <svg width="22" height="26" viewBox="0 0 22 26"><rect width="22" height="26" fill="#4aa3df" /><path d="M0 26V17L9 7L22 20V26Z" fill="#1d4f8c" /><circle cx="15" cy="7" r="2" fill="#fff" /></svg>
      </Tile>
      <Tile bar="bg-[#7cb8e8]">
        <svg width="21" height="26" viewBox="0 0 21 26"><rect width="21" height="26" rx="3" fill="#a81410" /><path d="M4 21C8 17 11 9 10 5C9 9 13 15 18 16C13 15 8 17 4 21Z" fill="none" stroke="#fff" strokeWidth="1.6" /></svg>
      </Tile>
      <Tile bar="bg-[#7cb8e8]">
        <svg width="22" height="26" viewBox="0 0 22 26"><rect width="22" height="26" fill="#eef2f2" /><path d="M11 5V21M3 13H19M6 8V12M4 10H8M16 8V12M14 10H18M6 15V19M4 17H8M16 15V19M14 17H18" stroke="#4a8a9c" strokeWidth="1.3" /></svg>
      </Tile>
      <div className="ml-[26px] flex h-[41px] items-center">
        <svg width="22" height="20" viewBox="0 0 22 20"><circle cx="7" cy="7" r="6" fill="#f2c84b" /><circle cx="9" cy="12" r="6" fill="#a9d4f2" /><circle cx="16" cy="13" r="5" fill="#a9d4f2" /><path d="M11 12V16" stroke="#2b88d8" strokeWidth="2" /></svg>
        <span className="ml-[10px] text-[14px]">31°C</span>
        <ChevronUp size={16} strokeWidth={1.2} className="ml-[15px]" />
        <svg width="14" height="18" viewBox="0 0 14 18" fill="none" stroke="#fff" className="ml-[9px]"><path d="M3 1H11M3 17H11" /><rect x="2.5" y="5.5" width="9" height="8" rx="1" /></svg>
        <svg width="16" height="14" viewBox="0 0 16 14" fill="#fff" className="ml-[8px]"><rect x="5" y="5" width="11" height="8" /><path d="M0 6H3M1 1V4M4 1V4" stroke="#fff" /></svg>
        <svg width="17" height="17" viewBox="0 0 17 17" fill="none" stroke="#fff" className="ml-[8px]"><circle cx="8.5" cy="8.5" r="7.5" /><ellipse cx="8.5" cy="8.5" rx="3.5" ry="7.5" /><path d="M1 8.5H16M2 4.5H15M2 12.5H15" /></svg>
        <svg width="15" height="16" viewBox="0 0 15 16" fill="none" stroke="#fff" className="ml-[8px]"><path d="M1 5.5H4L7 2V14L4 10.5H1ZM10 5A4 4 0 0 1 10 11M12.5 3A7 7 0 0 1 12.5 13" /></svg>
        <div className="ml-[9px] w-[56px] whitespace-nowrap text-center text-[11.5px] leading-[19px]">
          <div>7:30 AM</div>
          <div>6/14/2022</div>
        </div>
        <div className="relative ml-[16px]">
          <svg width="16" height="16" viewBox="0 0 16 16" fill="#fff"><path d="M0 0H16V12H7L4 15V12H0Z" /><path d="M3 4H13M3 7H13" stroke="#333" /></svg>
          <span className="absolute left-[7px] top-[6px] flex h-[15px] w-[15px] items-center justify-center rounded-full border border-[#aaa] bg-[#202020] text-[10px]">1</span>
        </div>
      </div>
    </div>
  );
}

export default function App() {
  return (
    <div className="flex h-[768px] w-[1366px] flex-col overflow-hidden bg-[#f3f2f1] font-['Open_Sans',sans-serif]">
      <TitleBar />
      <TabRow />
      <Ribbon />
      <div className="flex h-[508px]">
        <LeftRail />
        <div className="flex-1 bg-[#b3b3b3]"><Report /></div>
        <SidePane name="Filters" className="w-[32px] bg-white" filter />
        <SidePane name="Visualizations" className="w-[33px] border-l border-[#e1dfdd] bg-[#f3f2f1]" />
        <SidePane name="Fields" className="w-[33px] border-l border-[#e1dfdd] bg-[#f3f2f1]" />
      </div>
      <PageBar />
      <StatusBar />
      <Taskbar />
    </div>
  );
}
